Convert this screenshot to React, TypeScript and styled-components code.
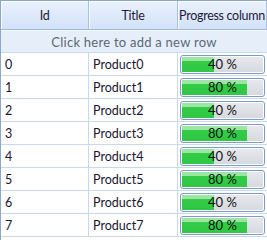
import React from "react";
import styled, { createGlobalStyle } from "styled-components";

const Global = createGlobalStyle`
  html, body { margin: 0; padding: 0; background: #fff; }
  body { font-family: Lato, "Liberation Sans", sans-serif; }
`;

const Grid = styled.div`
  width: 267px;
  height: 240px;
  overflow: hidden;
  border-top: 1px solid #8fa7c6;
  border-left: 1px solid #8fa7c6;
  box-sizing: border-box;
  font-size: 12.5px;
  color: #1b1530;
`;

const Row = styled.div`
  display: grid;
  grid-template-columns: 88px 89px 89px;
`;

const HeaderCell = styled.div`
  height: 29px;
  display: flex;
  align-items: center;
  justify-content: center;
  box-sizing: border-box;
  background: linear-gradient(#eaf2fd, #d2e2f7);
  border-right: 1px solid #a9c0df;
  border-bottom: 1px solid #9fb8da;
  box-shadow: inset 1px 1px 0 #f8fbff;
  color: #1e1a3a;
  font-size: 12.5px;
  letter-spacing: -0.3px;
  white-space: nowrap;
`;

const AddRow = styled.div`
  height: 23px;
  display: flex;
  align-items: center;
  justify-content: center;
  background: #e6eef9;
  border-bottom: 1px solid #c7d8ef;
  border-top: 1px solid #f4f8fd;
  box-sizing: border-box;
  color: #5c6878;
  font-size: 13px;
  letter-spacing: 0.25px;
`;

const Cell = styled.div`
  height: 23px;
  box-sizing: border-box;
  border-right: 1px solid #c7d8ef;
  border-bottom: 1px solid #c7d8ef;
  display: flex;
  align-items: center;
  padding-left: 4px;
  white-space: nowrap;
`;

const BarCell = styled(Cell)`
  padding-left: 2px;
  padding-right: 2px;
  border-right: none;
`;

const Bar = styled.div`
  position: relative;
  flex: 1;
  height: 19px;
  box-sizing: border-box;
  border: 1px solid #7f9cc9;
  border-radius: 3px;
  padding: 1px;
  background: #fff;
  display: flex;
`;

const Track = styled.div`
  flex: 1;
  background: linear-gradient(#e6e8ec, #d6d9df);
  display: flex;
  border-radius: 1px;
`;

const Fill = styled.div`
  background: linear-gradient(#9ae6a2 0, #9ae6a2 4px, #34cc47 4px, #2fc743 100%);
`;

const BarText = styled.span`
  position: absolute;
  inset: 0;
  display: flex;
  align-items: center;
  justify-content: center;
  color: #111;
  font-size: 13px;
`;

const data = Array.from({ length: 8 }, (_, i) => ({
  id: i,
  title: `Product${i}`,
  progress: i % 2 === 0 ? 40 : 80,
}));

export default function App() {
  return (
    <>
      <Global />
      <Grid>
        <Row>
          <HeaderCell>Id</HeaderCell>
          <HeaderCell>Title</HeaderCell>
          <HeaderCell>Progress column</HeaderCell>
        </Row>
        <AddRow>Click here to add a new row</AddRow>
        {data.map((d) => (
          <Row key={d.id}>
            <Cell>{d.id}</Cell>
            <Cell>{d.title}</Cell>
            <BarCell>
              <Bar>
                <Track>
                  <Fill style={{ width: `${d.progress}%` }} />
                </Track>
                <BarText>{d.progress} %</BarText>
              </Bar>
            </BarCell>
          </Row>
        ))}
      </Grid>
    </>
  );
}
